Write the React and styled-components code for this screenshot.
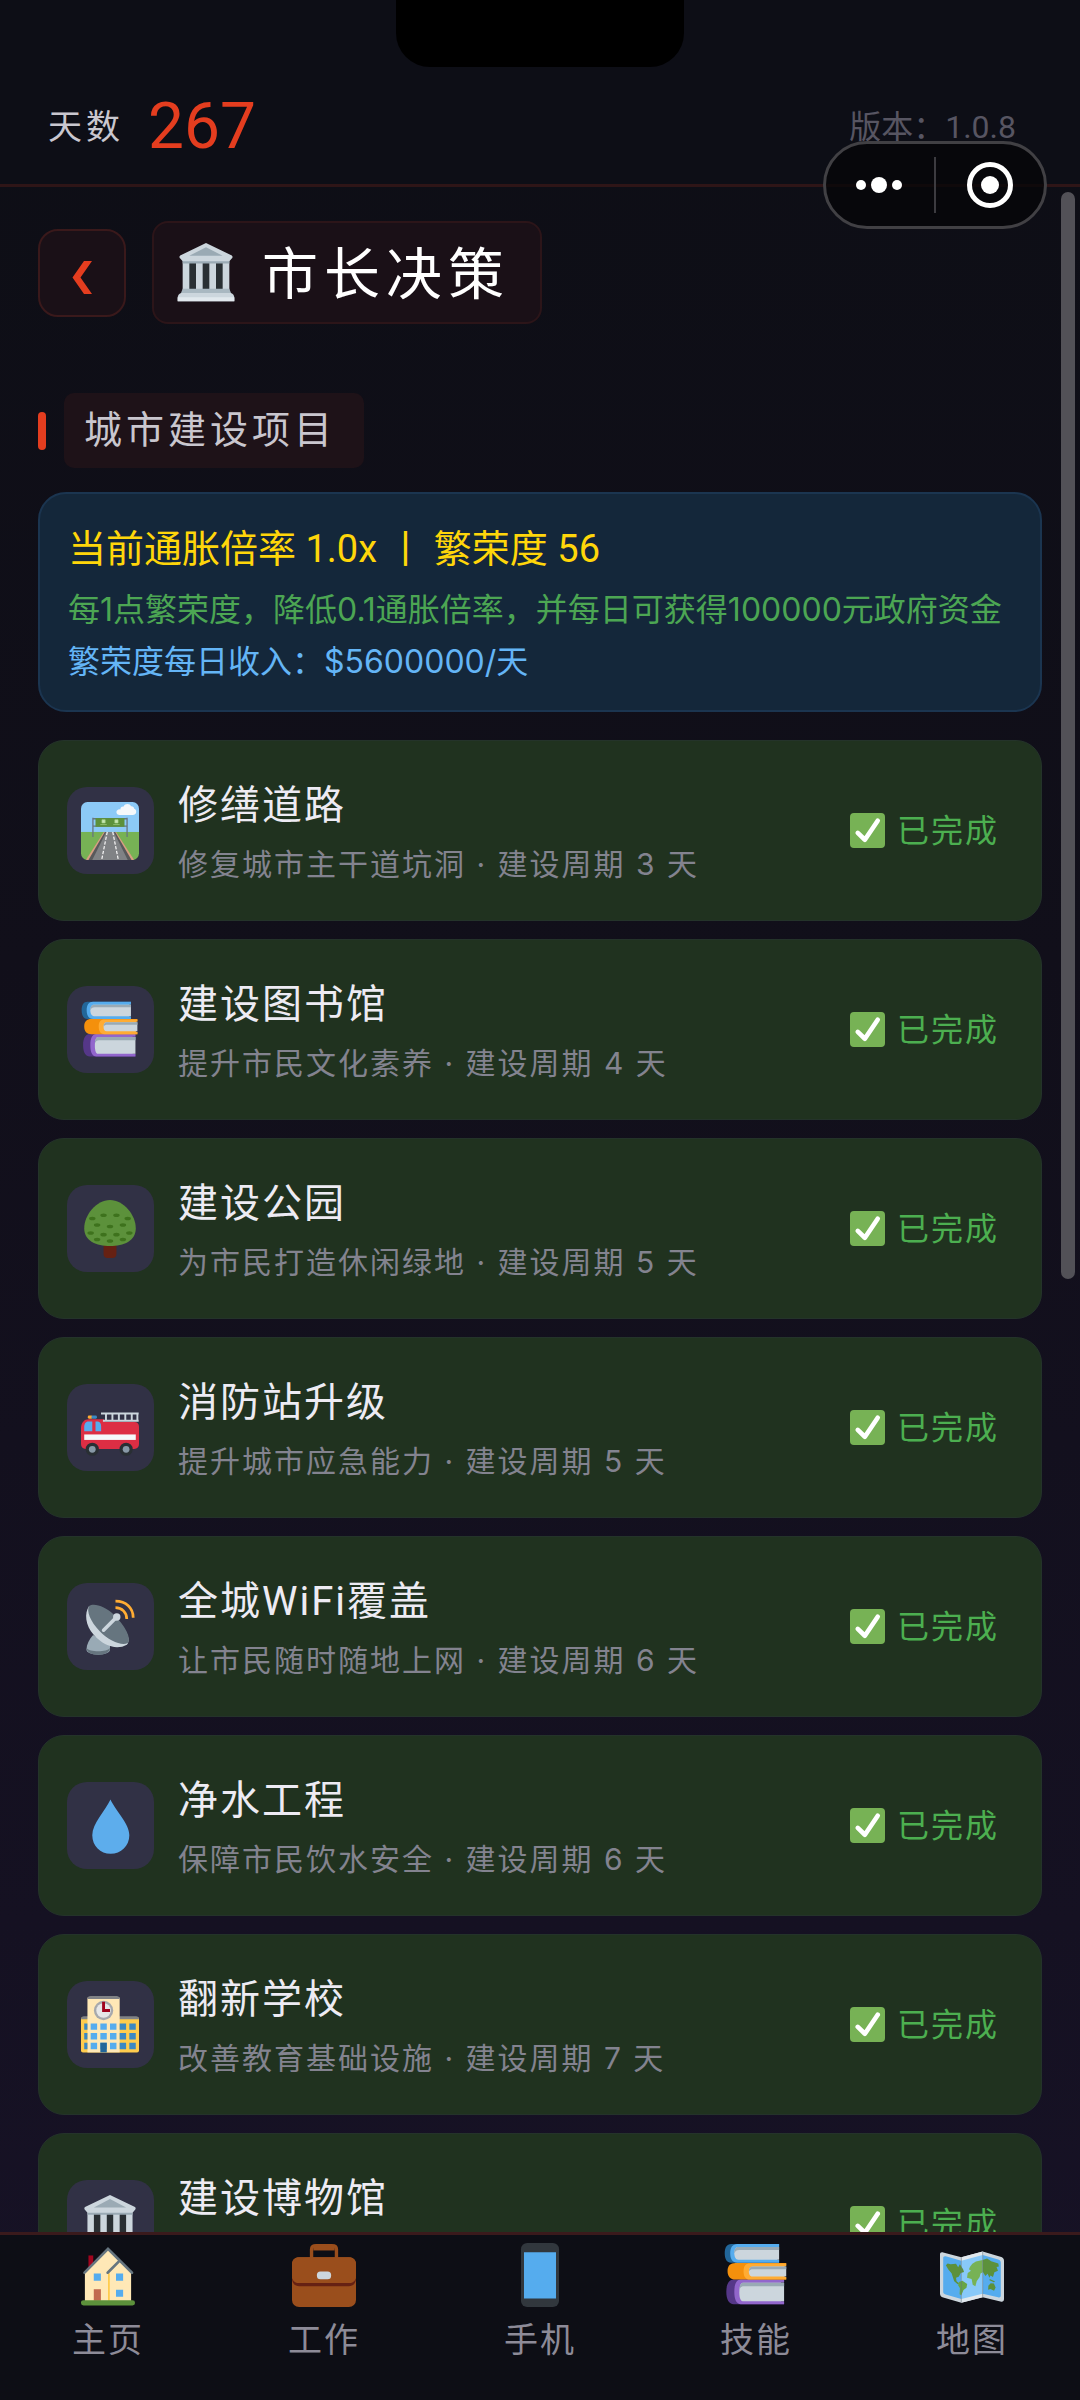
import React from 'react';
import styled, { createGlobalStyle } from 'styled-components';

const GlobalStyle = createGlobalStyle`
  * {
    box-sizing: border-box;
  }

  body {
    margin: 0;
    background: #0e0e16;
    font-family: Roboto, 'Noto Sans CJK SC', sans-serif;
    font-weight: 400;
  }

  button {
    margin: 0;
    padding: 0;
    border: 0;
    background: none;
    color: inherit;
    font: inherit;
    cursor: pointer;
  }
`;

const Screen = styled.div`
  position: relative;
  display: flex;
  flex-direction: column;
  height: 100vh;
  overflow: hidden;
  background: linear-gradient(180deg, #0d0e15 0%, #110f1a 40%, #171226 100%);
  color: #edebf3;
`;

const Notch = styled.div`
  position: absolute;
  top: 0;
  left: 50%;
  width: 288px;
  height: 67px;
  margin-left: -144px;
  border-radius: 0 0 34px 34px;
  background: #000;
`;

const Header = styled.header`
  flex: none;
  display: flex;
  align-items: center;
  justify-content: space-between;
  padding: 70px 64px 0 48px;
  height: 187px;
  border-bottom: 3px solid #2e1517;
  background: #0d0e16;
`;

const Days = styled.div`
  display: flex;
  align-items: center;
  gap: 24px;
`;

const DaysLabel = styled.span`
  padding-bottom: 6px;
  font-size: 34px;
  letter-spacing: 4px;
  color: #c9c7cf;
`;

const DaysValue = styled.span`
  font-size: 64px;
  line-height: 80px;
  color: #e43d1f;
`;

const Version = styled.span`
  padding-bottom: 6px;
  font-size: 32px;
  color: #575562;
`;

const Capsule = styled.div`
  position: absolute;
  top: 141px;
  right: 33px;
  z-index: 2;
  display: flex;
  align-items: center;
  width: 224px;
  height: 88px;
  border: 3px solid #414044;
  border-radius: 44px;
  background: rgba(5, 5, 8, 0.75);
`;

const CapsuleButton = styled.button`
  flex: 1;
  display: flex;
  justify-content: center;
`;

const CapsuleDivider = styled.span`
  width: 2px;
  height: 56px;
  background: #3c3b40;
`;

const Content = styled.main`
  flex: 1;
  min-height: 0;
  overflow: hidden;
  padding: 34px 38px 0;
`;

const TitleRow = styled.div`
  display: flex;
  align-items: center;
  gap: 26px;
`;

const BackButton = styled.button`
  display: flex;
  align-items: center;
  justify-content: center;
  width: 88px;
  height: 88px;
  border: 2px solid #3a191b;
  border-radius: 20px;
  background: #1a1017;
`;

const PageTitle = styled.h1`
  display: flex;
  align-items: center;
  gap: 26px;
  height: 103px;
  margin: 0;
  padding: 0 30px 0 22px;
  border: 2px solid #2c1519;
  border-radius: 16px;
  background: #1a1017;
  color: #fff;
  font-size: 56px;
  font-weight: 400;
  letter-spacing: 6px;
`;

const TitleText = styled.span`
  padding-bottom: 6px;
`;

const SectionRow = styled.div`
  display: flex;
  align-items: center;
  gap: 18px;
  margin: 69px 0 24px;
`;

const SectionBar = styled.span`
  width: 8px;
  height: 38px;
  border-radius: 4px;
  background: #e43d1f;
`;

const SectionTitle = styled.h2`
  margin: 0;
  padding: 0 28px 0 20px;
  border-radius: 10px;
  background: #1e1218;
  color: #c9c6ce;
  font-size: 38px;
  font-weight: 400;
  line-height: 75px;
  letter-spacing: 4px;
`;

const InfoCard = styled.section`
  height: 220px;
  padding: 20px 28px;
  border: 2px solid #1b3550;
  border-radius: 28px;
  background: #14273a;
  white-space: nowrap;
`;

const InfoHeadline = styled.p`
  margin: 0;
  color: #ffd60a;
  font-size: 38px;
  line-height: 70px;
`;

const InfoLine = styled.p`
  margin: 0;
  color: ${(p) => p.$color};
  font-family: Inter, 'Noto Sans CJK SC', sans-serif;
  font-size: 32px;
  line-height: 52px;
`;

const ProjectList = styled.ul`
  display: flex;
  flex-direction: column;
  gap: 18px;
  margin: 0;
  padding: 28px 0 40px;
  list-style: none;
`;

const ProjectCard = styled.li`
  flex: none;
  display: flex;
  align-items: center;
  gap: 24px;
  height: 181px;
  padding: 0 42px 0 28px;
  border: 1px solid #24332a;
  border-radius: 26px;
  background: #20321f;
`;

const IconTile = styled.div`
  display: flex;
  align-items: center;
  justify-content: center;
  width: 87px;
  height: 87px;
  padding-right: 2px;
  border-radius: 20px;
  background: #313145;
`;

const ProjectText = styled.div`
  flex: 1;
  padding-top: 8px;
`;

const ProjectName = styled.h3`
  margin: 0;
  color: #edebf3;
  font-size: 40px;
  font-weight: 400;
  line-height: 58px;
  letter-spacing: 2px;
`;

const ProjectDesc = styled.p`
  margin: 0;
  color: #83838f;
  font-family: Inter, 'Noto Sans CJK SC', sans-serif;
  font-size: 30px;
  line-height: 58px;
  letter-spacing: 2px;
`;

const Status = styled.div`
  display: flex;
  align-items: center;
  gap: 12px;
  color: #4caf50;
`;

const StatusText = styled.span`
  padding-bottom: 6px;
  font-size: 32px;
  letter-spacing: 2px;
`;

const ScrollThumb = styled.div`
  position: absolute;
  top: 192px;
  right: 5px;
  width: 14px;
  height: 1087px;
  border-radius: 7px;
  background: #525157;
`;

const TabBar = styled.nav`
  flex: none;
  display: flex;
  height: 168px;
  border-top: 3px solid #3a1a1c;
  background: #0d0e15;
`;

const Tab = styled.button`
  flex: 1;
  display: flex;
  flex-direction: column;
  align-items: center;
  gap: 8px;
  padding-top: 8px;
  color: #8d8b98;
  font-size: 34px;
  line-height: 50px;
  letter-spacing: 2px;
`;

const Drawing = styled.svg`
  flex: none;
`;

const Emoji = ({ size = 58, children }) => (
  <Drawing width={size} height={size} viewBox="0 0 36 36" aria-hidden="true">
    {children}
  </Drawing>
);

const HighwayIcon = ({ size }) => (
  <Emoji size={size}>
    <clipPath id="road-clip">
      <rect width="36" height="36" rx="4" />
    </clipPath>
    <g clipPath="url(#road-clip)">
      <rect width="36" height="19" fill="#8ccaf7" />
      <rect y="18.6" width="36" height="17.4" fill="#77b255" />
      <path d="M14.2 18.6 3 36h30L21.8 18.6z" fill="#d99e82" />
      <path d="M14.8 18.6 4.6 36h26.8L21.2 18.6z" fill="#58595b" />
      <path d="M15.6 18.6 7 36h22L20.4 18.6z" fill="#808285" />
      <path d="M16.3 18.6 12.8 36M19.7 18.6 23.2 36" stroke="#fff" strokeWidth=".7" strokeDasharray="2 1" />
      <path d="M7.4 9.8v12M28.6 9.8v12M7 10.4h22M7 15h22" stroke="#66757f" strokeWidth=".8" fill="none" />
      <rect x="9" y="10" width="18" height="5.4" fill="#5c913b" />
      <path d="M13 11h2v2h-2zM21 11h2v2h-2zM12 14h4M20 14h4" fill="#c6e5b3" stroke="#a6d388" strokeWidth=".4" />
      <path d="M33 4.2c0-1-1-1.8-2-1.6C30.5 1 27.3.7 26.5 2.8 24.8 2.7 24.3 4 24.5 4.6 22.8 4.4 22 5.5 22 6.3 22 7.3 22.8 8 24 8h8c1.5 0 2.3-1 2.3-2S33.700 4.300 33 4.200z" fill="#f5f8fa" />
    </g>
  </Emoji>
);

const BooksIcon = ({ size }) => (
  <Emoji size={size}>
    <g transform="translate(-1)">
      <path d="M34.8 20.5H6.5C3.8 20.5 2.3 23 2.3 27.4s1.5 7 4.2 7h28.3v-1.400H33v-11h1.800z" fill="#553788" />
      <path d="M34.8 20.5H10.5C8 20.5 6.8 23 6.8 27.4s1.200 7 3.700 7h24.300v-1.600H33v-10.600h1.800z" fill="#9266cc" />
      <path d="M34.8 22.3H11.5C10.2 22.3 9.6 25 9.6 27.7s.6 5 1.900 5h23.300z" fill="#ccd6dd" />
      <path d="M34.8 22.3H11.8c-1.400 0-2 1.500-2.200 4 .6-1.400 1.200-2 2.600-2h22.600z" fill="#99aab5" />
      <path d="M36 11.2H7.5C4.5 11.2 3 12.8 3 15.8s1.500 4.800 4.500 4.800H36v-1.400h-1v-6.600h1z" fill="#f4900c" />
      <path d="M36 11.5H15.5c-2.400 0-3.500 1.500-3.500 4.400s1.100 4.700 3.500 4.700H36v-1.500h-1v-6.200h1z" fill="#ffac33" />
      <path d="M36 13.2H17c-1.500 0-2 1.200-2 2.800s.5 2.800 2 2.800h19z" fill="#ccd6dd" />
      <path d="M36 13.2H17c-1.300 0-1.900 1-2 2.800.5-.9 1.200-1.200 2.300-1.200H36z" fill="#99aab5" />
      <path d="M32 .5H5C2.6.5 1.4 2.5 1.4 5.8S2.6 11.1 5 11.1h27V9.600h-1V2h1z" fill="#226699" />
      <path d="M32 .5H8.5C5.8.5 4.5 2.5 4.5 5.8s1.300 5.300 4 5.300H32V9.600h-1V2.200h1z" fill="#55acee" />
      <path d="M32 2.3H9c-1.500 0-2.200 1.500-2.200 3.500S7.500 9.400 9 9.400h23z" fill="#ccd6dd" />
      <path d="M32 2.3H9c-1.500 0-2.200 1.500-2.200 3.500C7.300 4.500 8 3.900 9.500 3.900H32z" fill="#99aab5" />
    </g>
  </Emoji>
);

const leaves = [
  [14, 9.5], [22, 9.5], [7, 11.5], [29, 11.5], [10, 15.5], [18, 16.5], [26, 15.5],
  [6, 20.5], [14, 21.5], [22, 21.5], [30, 20.5], [10, 24.5], [18, 25.5], [26, 24.5],
];

const TreeIcon = ({ size }) => (
  <Emoji size={size}>
    <path d="M14 26h8v7.500c0 1.700-1 2.500-2.500 2.500h-3C15 36 14 35.200 14 33.500z" fill="#662113" />
    <path d="M18 0C9.500 0 2 9.500 2 17.500 2 25.500 9.500 28.500 18 28.500s16-3 16-11C34 9.500 26.500 0 18 0z" fill="#5c913b" />
    {leaves.map(([x, y]) => (
      <ellipse key={`${x}-${y}`} cx={x} cy={y} rx="2" ry="1.1" fill="#3e721d" />
    ))}
  </Emoji>
);

const FireEngineIcon = ({ size }) => (
  <Emoji size={size}>
    <path d="M5 12.500h9l1 1.800h18c2 0 3 1.200 3 3V28c0 2-1 3-3 3H3c-2 0-3-1-3-3v-9.500c0-4 2-6 5-6z" fill="#dd2e44" />
    <path d="M12.400 9h23.400M13.600 13.500h22.200M15.500 9v4.500M19.500 9v4.500M23.500 9v4.500M27.500 9v4.500M31.500 9v4.500M35 9v4.500" stroke="#ccd6dd" strokeWidth="1.2" fill="none" />
    <rect x="4.2" y="10.3" width="3" height="1.9" rx=".8" fill="#ffac33" />
    <rect x="6.5" y="10.3" width="3.4" height="1.9" rx=".8" fill="#3b88c3" />
    <path d="M4.500 14H7v6H2v-2.500C2 15.500 3 14 4.500 14zM9 14h1.500c1.300 0 2 1.500 2 3v3H9z" fill="#55acee" />
    <rect x="2" y="22" width="32" height="3.4" fill="#f5f8fa" />
    <circle cx="7" cy="31.2" r="4.1" fill="#292f33" />
    <circle cx="28" cy="31.2" r="4.1" fill="#292f33" />
    <circle cx="7" cy="31.2" r="2.1" fill="#8899a6" />
    <circle cx="28" cy="31.2" r="2.1" fill="#8899a6" />
  </Emoji>
);

const SatelliteIcon = ({ size }) => (
  <Emoji size={size}>
    <path d="M7.500 23c-2.500 3-4.100 6-4.100 9 0 2 3.300 3.200 7.300 3.200s7.300-1.200 7.300-3.200v-3z" fill="#99aab5" />
    <path d="M3.400 31c0 2.600 3.200 4.300 7.300 4.300S18 33.600 18 31c-1 1.300-4 2-7.300 2s-6.300-.7-7.300-2z" fill="#66757f" />
    <path d="M5 5C2 9.500 2.600 17 8 23c6 6.700 14 9.600 20.500 6C31 26 29 22 24 15z" fill="#ccd6dd" />
    <path d="M5 5c3-2 10 0 16 6 6.500 6.500 10.500 14 8 17-3.500 1.800-11.500-1-17.500-7.500C5.700 14.500 3.300 8 5 5z" fill="#66757f" />
    <path d="M14 20l8-8" stroke="#ccd6dd" strokeWidth="2.2" strokeLinecap="round" />
    <circle cx="22.2" cy="11.8" r="2.3" fill="#ccd6dd" />
    <path d="M21.400 6c4 0 7 3 7 7M21.400 2c6.500 0 11 4 11 10.200" stroke="#ffac33" strokeWidth="1.7" fill="none" />
  </Emoji>
);

const DropletIcon = ({ size }) => (
  <Emoji size={size}>
    <path d="M18.300 1.500C15 8.500 7 16.500 7 23.700c0 6.600 5 11.500 11.400 11.500S30 30.300 30 23.700C30 16.500 21.500 8.500 18.300 1.500z" fill="#5dadec" />
  </Emoji>
);

const SchoolIcon = ({ size }) => (
  <Emoji size={size}>
    <rect y="13" width="36" height="22" rx="1.2" fill="#ffcc4d" />
    <path d="M0 14.500c0-1.200.6-2 1.800-2h32.400c1.200 0 1.800.8 1.800 2z" fill="#808285" />
    <rect x="4" y="1" width="20" height="34" fill="#ffe8b6" />
    <path d="M4 1.800C4 .5 4.800 0 6 0h16c1.200 0 2 .5 2 1.800z" fill="#808285" />
    {[17, 23, 29].map((y) => (
      <g key={y}>
        <path d={`M2 ${y}h2v4H2zM24 ${y}h4v4h-4zM30 ${y}h4v4h-4z`} fill="#3b88c3" />
        <path d={`M6 ${y}h4v4H6zM12 ${y}h4v4h-4zM18 ${y}h4v4h-4z`} fill="#55acee" />
      </g>
    ))}
    <path d="M12 29h4v6h-4z" fill="#226699" />
    <circle cx="14" cy="9" r="6" fill="#a7a9ac" />
    <circle cx="14" cy="9" r="4.5" fill="#e6e7e8" />
    <path d="M14 3.500V9h4" stroke="#a0041e" strokeWidth="1.8" fill="none" />
  </Emoji>
);

const MuseumIcon = ({ size }) => (
  <Emoji size={size}>
    <path d="M5 10h26v18H5z" fill="#292f33" />
    <path d="M4 11h4v17H4zM12 11h4v17h-4zM20 11h4v17h-4zM28 11h4v17h-4z" fill="#ccd6dd" />
    <path d="M4 10.500h28v1.800H4z" fill="#9aaab4" />
    <path d="M18 0 2.500 7.500c-.7.500-.5 1.500.2 2L4 11h28l1.300-1.500c.7-.5.900-1.500.2-2z" fill="#ccd6dd" />
    <path d="M18 2.500 8 7.700h20z" fill="#9aaab4" />
    <path d="M4 27.500h28l1 2.500H3z" fill="#a9b8c1" />
    <path d="M3 30h30c1.200.5 2 1.500 2 3v2H1v-2c0-1.500.8-2.500 2-3z" fill="#ccd6dd" />
    <path d="M1 32.500h34V35H1z" fill="#e1e8ed" />
  </Emoji>
);

const CheckIcon = () => (
  <Emoji size={35}>
    <rect width="36" height="36" rx="4" fill="#77b255" />
    <path d="M8 20.500l7.300 7L28.500 8" stroke="#fff" strokeWidth="4.8" strokeLinecap="round" strokeLinejoin="round" fill="none" />
  </Emoji>
);

const HouseIcon = ({ size }) => (
  <Emoji size={size}>
    <path d="M7 7h2.700v7H7z" fill="#a0041e" />
    <path d="M5 16.500 18 3.500l6.500 7L31 16.500V33H5z" fill="#ffe8b6" />
    <path d="M18.500 17v15.500" stroke="#ffcc4d" />
    <path d="M4.800 16.700 18 3.300l13.500 13.400M17.800 16.700l6.500-6.500" stroke="#66757f" strokeWidth="1.5" strokeLinecap="round" fill="none" />
    <path d="M10 17.200h4v4h-4zM22.500 17.200h4v4h-4zM22.500 26.300h4v4h-4z" fill="#55acee" />
    <path d="M10 26h4v6.500h-4z" fill="#c1694f" />
    <rect x="2.8" y="32.2" width="30.4" height="2.9" rx="1.4" fill="#5c913b" />
  </Emoji>
);

const BriefcaseIcon = ({ size }) => (
  <Emoji size={size}>
    <path d="M11 9V3.500C11 2 12 1.500 13.500 1.500h9C24 1.500 25 2 25 3.500V9" stroke="#9a4e1c" strokeWidth="1.9" fill="none" />
    <path d="M12 1.200h12v3H12z" fill="#9a4e1c" />
    <rect y="8" width="36" height="28" rx="4" fill="#9a4e1c" />
    <path d="M0 20c0 2.500 1.500 4.300 4 4.300h28c2.500 0 4-1.800 4-4.300z" fill="#662113" />
    <path d="M0 12c0-2.500 1.500-4 4-4h28c2.500 0 4 1.500 4 4v6.500c0 2.500-1.500 4-4 4H4c-2.500 0-4-1.500-4-4z" fill="#9a4e1c" />
    <rect x="14" y="16" width="8" height="4.4" rx="2" fill="#ccd6dd" />
  </Emoji>
);

const PhoneIcon = ({ size }) => (
  <Emoji size={size}>
    <rect x="7.3" width="21.4" height="36" rx="3.5" fill="#31373d" />
    <path d="M9 5.200h18v26H9z" fill="#55acee" />
  </Emoji>
);

const MapIcon = ({ size }) => (
  <Emoji size={size}>
    <path d="M0 6.500C0 5.500.7 5 1.800 5.400L12 8l12-3.200 10 3c1.300.4 2 1 2 2.200v21.500c0 1.200-.8 1.800-2 1.400L24 30.500 12 33.600 1.800 30.700C.7 30.400 0 29.700 0 28.600z" fill="#ccd6dd" />
    <path d="M12 8l12-3.200v25.700L12 33.600z" fill="#e1e8ed" />
    <path d="M1.800 8.500c0-.8.5-1.200 1.400-1L12 10v21.500L3.200 29c-.9-.3-1.400-.8-1.400-1.600zM24 6.800l8.700 2.500c.9.300 1.500.8 1.500 1.700v18.500c0 .9-.6 1.300-1.500 1L24 28.500z" fill="#55acee" />
    <path d="M12 10l12-3.200v21.700l-12 3z" fill="#88c9f9" />
    <path d="M3.300 12.500 4.300 11.500 6 12l3-.3 1.200 2 1-1.700 1.800 2.800.5 1.500-1.800.6-1.200 2.100-1.500.6.3 1.900 1.500 1.300-.8.400-2-1.700L6.500 17 4.600 14.800z" fill="#5c913b" />
    <path d="M10.600 22l2-.7 2.700 1.700-.4 2.200-1.700 1.300-1.200 2.900-1-.6.200-3.300-1-1.800z" fill="#68a544" />
    <path d="M24 9.500l2.500-.8 2.300 1.500 4 1.300.3 1.700-1.300.3.8 2.100-2 .9-.8 2.600-1.400-.8-.6 1.300-1-2.300-1.300 1.200-1.500-2.500zM27.200 24l1.300-1.300 1.800.1 1 2.300-.9 1.700-2-.9-1.300.4zM28 20.200l3 1.400-.7.500-2.500-1.100z" fill="#5c913b" />
    <path d="M16.300 14.800l.6-1.500 1.300-1.600 2-1.300L24 9.500v7l-1.200.6-.5 2-1.600 2.300-.8 2.900-1.500-.8-.6-3.200-2.600-.7.4-2.700 1.800-1.300z" fill="#77b255" />
    <path d="M12 8v25.500M24 4.800v25.700" stroke="#66757f" strokeWidth=".3" />
  </Emoji>
);

const projects = [
  { name: '修缮道路', desc: '修复城市主干道坑洞', days: 3, icon: HighwayIcon },
  { name: '建设图书馆', desc: '提升市民文化素养', days: 4, icon: BooksIcon },
  { name: '建设公园', desc: '为市民打造休闲绿地', days: 5, icon: TreeIcon },
  { name: '消防站升级', desc: '提升城市应急能力', days: 5, icon: FireEngineIcon },
  { name: '全城WiFi覆盖', desc: '让市民随时随地上网', days: 6, icon: SatelliteIcon },
  { name: '净水工程', desc: '保障市民饮水安全', days: 6, icon: DropletIcon },
  { name: '翻新学校', desc: '改善教育基础设施', days: 7, icon: SchoolIcon },
  { name: '建设博物馆', desc: '丰富市民文化生活', days: 7, icon: MuseumIcon },
];

const tabs = [
  { label: '主页', icon: HouseIcon },
  { label: '工作', icon: BriefcaseIcon },
  { label: '手机', icon: PhoneIcon },
  { label: '技能', icon: BooksIcon },
  { label: '地图', icon: MapIcon },
];

const App = () => {
  return (
    <>
      <GlobalStyle />
      <Screen>
        <Header>
          <Days>
            <DaysLabel>天数</DaysLabel>
            <DaysValue>267</DaysValue>
          </Days>
          <Version>版本：1.0.8</Version>
        </Header>

        <Content>
          <TitleRow>
            <BackButton aria-label="返回">
              <svg width="24" height="48" viewBox="0 0 24 48">
                <path d="M14 12h8L10.500 28.500 22 45h-8L2.500 28.500z" fill="#e43d1f" />
              </svg>
            </BackButton>
            <PageTitle>
              <MuseumIcon size={60} />
              <TitleText>市长决策</TitleText>
            </PageTitle>
          </TitleRow>

          <SectionRow>
            <SectionBar />
            <SectionTitle>城市建设项目</SectionTitle>
          </SectionRow>

          <InfoCard>
            <InfoHeadline>当前通胀倍率 1.0x 丨 繁荣度 56</InfoHeadline>
            <InfoLine $color="#4ca653">每1点繁荣度，降低0.1通胀倍率，并每日可获得100000元政府资金</InfoLine>
            <InfoLine $color="#64b5f6">繁荣度每日收入：$5600000/天</InfoLine>
          </InfoCard>

          <ProjectList>
            {projects.map(({ name, desc, days, icon: Icon }) => (
              <ProjectCard key={name}>
                <IconTile>
                  <Icon />
                </IconTile>
                <ProjectText>
                  <ProjectName>{name}</ProjectName>
                  <ProjectDesc>{`${desc} · 建设周期 ${days} 天`}</ProjectDesc>
                </ProjectText>
                <Status>
                  <CheckIcon />
                  <StatusText>已完成</StatusText>
                </Status>
              </ProjectCard>
            ))}
          </ProjectList>
        </Content>

        <TabBar>
          {tabs.map(({ label, icon: Icon }) => (
            <Tab key={label}>
              <Icon size={64} />
              {label}
            </Tab>
          ))}
        </TabBar>

        <Notch />
        <ScrollThumb />
        <Capsule>
          <CapsuleButton aria-label="更多">
            <svg width="50" height="20" viewBox="0 0 50 20" fill="#fff">
              <circle cx="6" cy="10" r="5" />
              <circle cx="24" cy="10" r="8" />
              <circle cx="42" cy="10" r="5" />
            </svg>
          </CapsuleButton>
          <CapsuleDivider />
          <CapsuleButton aria-label="关闭">
            <svg width="48" height="48" viewBox="0 0 48 48">
              <circle cx="24" cy="24" r="20.5" stroke="#fff" strokeWidth="5" fill="none" />
              <circle cx="24" cy="24" r="9" fill="#fff" />
            </svg>
          </CapsuleButton>
        </Capsule>
      </Screen>
    </>
  );
};

export default App;
